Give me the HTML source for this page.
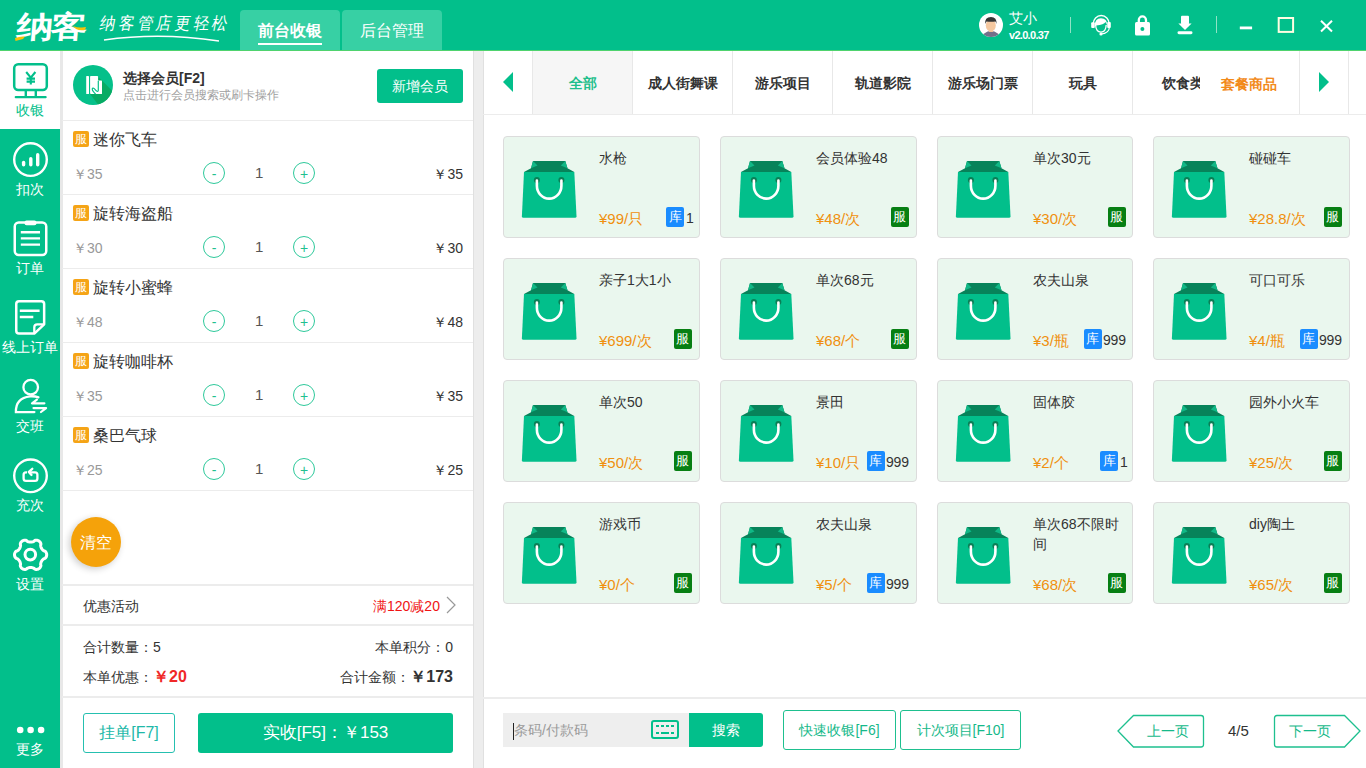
<!DOCTYPE html>
<html><head><meta charset="utf-8"><style>
*{margin:0;padding:0;box-sizing:border-box}
html,body{width:1366px;height:768px;overflow:hidden;background:#ededed;font-family:"Liberation Sans",sans-serif;color:#333}
div,span,svg{position:absolute}
.t{white-space:nowrap;line-height:1}
#top{left:0;top:0;width:1366px;height:50px;background:#02bf8b}
#topline{left:0;top:50px;width:1366px;height:1px;background:#4fd36e}
.tab{top:10px;height:40px;background:#37d0a4;border-radius:4px 4px 0 0;color:#fff;font-size:16px;text-align:center;line-height:42px}
#side{left:0;top:51px;width:60px;height:717px;background:#02bf8b}
#sidesel{left:0;top:51px;width:60px;height:78px;background:#fff}
#sideline{left:60px;top:51px;width:3px;height:717px;background:#e8e8e8}
.sl{left:0;width:60px;color:#fff;font-size:14px;text-align:center;line-height:14px}
#left{left:63px;top:51px;width:410px;height:717px;background:#fff}
#right{left:484px;top:51px;width:882px;height:717px;background:#fff}
.hl{height:1px;background:#ececec}
.badge{width:16px;height:16px;border-radius:2px;background:#f5a416;color:#fff;font-size:12px;line-height:16px;text-align:center}
.pn{font-size:16px;color:#333}
.pp{font-size:14px;color:#999}
.qb{width:22px;height:22px;border:1px solid #2ec99b;border-radius:50%;color:#22c08f;font-size:14px;text-align:center;line-height:22px}
.qn{font-size:15px;color:#555}
.pr{font-size:14px;color:#333;text-align:right}
.card{width:197px;height:102px;background:#eaf7ee;border:1px solid #dcdcdc;border-radius:4px}
.cn{font-size:14px;color:#333;line-height:20px;white-space:normal;word-break:break-all;width:94px}
.cp{font-size:15px;color:#f0900e}
.kb{width:18px;height:20px;border-radius:2px;background:#1a8cff;color:#fff;font-size:13px;line-height:20px;text-align:center}
.fb{width:18px;height:20px;border-radius:2px;background:#077f13;color:#fff;font-size:13px;line-height:20px;text-align:center}
.cat{white-space:nowrap;top:51px;height:63px;width:100px;border-left:1px solid #e8e8e8;font-size:14px;font-weight:bold;color:#333;text-align:center;line-height:64px}
.btn{border:1px solid #1ec08f;border-radius:3px;color:#16b98a;font-size:14px;text-align:center;background:#fff}
</style></head><body>
<div id="top"></div><div id="topline"></div>
<div class="tab" style="left:240px;width:100px;font-weight:bold">前台收银<span style="left:18px;top:33px;width:64px;height:2px;background:#fff;line-height:0"></span></div>
<div class="tab" style="left:342px;width:100px">后台管理</div>
<div class="t" style="left:18px;top:12px;font-size:30px;font-weight:900;color:#fff;letter-spacing:-2px;transform-origin:0 0;transform:scaleX(1.22) skewX(-4deg)">纳客</div>
<svg style="left:0;top:0" width="240" height="50"><path d="M15 38 Q20 36 25 36.5 L23 39 Q19 40 15.5 41Z" fill="#f7c20a"/><path d="M73 26 Q78 28 82 27.5 L86 27 L85 30 Q80 31 76 29Z" fill="#f7c20a"/><path d="M104 40 Q160 32 219 41" fill="none" stroke="#fff" stroke-width="1.3"/></svg>
<div class="t" style="left:102px;top:15px;font-size:15.5px;color:#fff;letter-spacing:2.7px;transform-origin:0 0;transform:scaleY(1.1) skewX(-12deg);font-weight:300">纳客管店更轻松</div>
<svg style="left:0;top:0" width="1366" height="50"><defs><clipPath id="av"><circle cx="991" cy="25" r="12"/></clipPath></defs><circle cx="991" cy="25" r="12" fill="#fff"/><g clip-path="url(#av)"><ellipse cx="991" cy="39" rx="9" ry="8" fill="#72708a"/><rect x="989" y="28" width="4" height="4" fill="#f0bf95"/><ellipse cx="990.8" cy="25.5" rx="5" ry="6" fill="#f5c8a0"/><path d="M985.2 24 Q984.5 17 991 17 Q997 17 996.5 24 L995.5 21.5 Q991 22 986.5 21.5Z" fill="#363636"/></g><rect x="1070" y="17" width="1" height="16" fill="#8fe3c6"/><rect x="1216" y="16" width="1" height="17" fill="#8fe3c6"/><path d="M1093.2 24 A8 8.5 0 0 1 1109.2 24" fill="none" stroke="#fff" stroke-width="1.4"/><rect x="1091.2" y="22.2" width="3.6" height="5.8" rx="1" fill="#fff"/><rect x="1107.2" y="22" width="3.6" height="6" rx="1" fill="#fff"/><path d="M1095 26 Q1094.5 18.3 1101 18.3 Q1107.3 18.3 1107 25 L1105.5 22 Q1104 24.8 1096.2 25.6Z" fill="#fff"/><path d="M1095.6 25 Q1096 32 1101 32.2 Q1105.8 32 1106.2 25" fill="none" stroke="#fff" stroke-width="1.3"/><path d="M1109.5 27 Q1109 33.5 1101 34" fill="none" stroke="#fff" stroke-width="1.2"/><circle cx="1101" cy="34" r="1.6" fill="#fff"/><path d="M1138.8 22.5 V20 A3.6 3.6 0 0 1 1146 20 V22.5" fill="none" stroke="#fff" stroke-width="2.3"/><rect x="1135" y="22" width="15" height="13.4" rx="1.5" fill="#fff"/><circle cx="1142.4" cy="28.9" r="2" fill="#02bf8b"/><rect x="1181" y="15.7" width="8" height="8.5" rx="1" fill="#fff"/><path d="M1178.4 23.4 H1191.6 L1185 30Z" fill="#fff"/><rect x="1177.5" y="31.3" width="15" height="2.9" rx="1.45" fill="#fff"/><rect x="1239.8" y="26.5" width="12.3" height="2.8" fill="#fff"/><rect x="1278.7" y="18" width="14.4" height="13.9" fill="none" stroke="#fffde2" stroke-width="2"/><path d="M1321 20.8 L1332 31.5 M1332 20.8 L1321 31.5" stroke="#fff" stroke-width="2"/></svg>
<div class="t" style="left:1009px;top:11px;font-size:14px;color:#fff">艾小</div>
<div class="t" style="left:1009px;top:30px;font-size:11px;font-weight:bold;color:#fff;letter-spacing:-0.7px">v2.0.0.37</div>
<div id="side"></div><div id="sidesel"></div><div id="sideline"></div>
<div class="sl t" style="top:103px;color:#02bf8b">收银</div>
<div class="sl t" style="top:182px;color:#fff">扣次</div>
<div class="sl t" style="top:261px;color:#fff">订单</div>
<div class="sl t" style="top:340px;color:#fff">线上订单</div>
<div class="sl t" style="top:419px;color:#fff">交班</div>
<div class="sl t" style="top:498px;color:#fff">充次</div>
<div class="sl t" style="top:577px;color:#fff">设置</div>
<div class="sl t" style="top:742px;color:#fff">更多</div>
<svg style="left:0;top:0" width="60" height="768"><rect x="14.2" y="64.2" width="32.6" height="25.8" rx="4" fill="none" stroke="#02bf8b" stroke-width="2.5"/><rect x="24.6" y="90" width="2.4" height="6.5" fill="#02bf8b"/><rect x="34.6" y="90" width="2.4" height="6.5" fill="#02bf8b"/><rect x="14.7" y="96" width="32" height="2.2" rx="1" fill="#02bf8b"/><path d="M26.2 72 L30.8 77.6 L35.4 72 M30.8 77.6 V84.6 M26.6 78.6 H35 M26.6 81.6 H35" fill="none" stroke="#02bf8b" stroke-width="2.1"/><circle cx="30.5" cy="159.6" r="16.3" fill="none" stroke="#fff" stroke-width="2.4"/><line x1="23.60" y1="162.50" x2="23.60" y2="164.80" stroke="#fff" stroke-width="3.4" stroke-linecap="round"/><line x1="30.80" y1="158.70" x2="30.80" y2="164.80" stroke="#fff" stroke-width="3.4" stroke-linecap="round"/><line x1="37.70" y1="154.70" x2="37.70" y2="164.80" stroke="#fff" stroke-width="3.4" stroke-linecap="round"/><rect x="14.75" y="222.5" width="31.5" height="32.5" rx="4" fill="none" stroke="#fff" stroke-width="2.5"/><rect x="24.5" y="220.5" width="12" height="4.8" rx="2" fill="#fff"/><path d="M20.8 232.2 H40 M20.8 238.4 H40 M20.8 244.6 H40" stroke="#fff" stroke-width="2.4"/><path d="M19 301.25 H41.4 Q44.15 301.25 44.15 304 V324.3 L34.3 333.55 H19 Q16.25 333.55 16.25 330.8 V304 Q16.25 301.25 19 301.25Z" fill="none" stroke="#fff" stroke-width="2.5" stroke-linejoin="round"/><path d="M44.15 324.3 H37.3 Q34.3 324.3 34.3 327.3 V333.55" fill="none" stroke="#fff" stroke-width="2.3"/><path d="M19.8 310.8 H39.6 M19.8 317 H33.3" stroke="#fff" stroke-width="2.4"/><circle cx="30.7" cy="387.2" r="7.3" fill="none" stroke="#fff" stroke-width="2.3"/><path d="M34.4 412.1 H15.9 Q15.5 398 30 396.3 Q35 396 38.4 397.4" fill="none" stroke="#fff" stroke-width="2.3" stroke-linecap="round"/><path d="M36.9 399.6 L32 403.3 L44.4 403.3 M33.5 408.1 H46.1 L41 412" fill="none" stroke="#fff" stroke-width="2.2" stroke-linecap="round" stroke-linejoin="round"/><circle cx="30.5" cy="475.8" r="16.3" fill="none" stroke="#fff" stroke-width="2.4"/><path d="M27 472.3 H26 Q23.6 472.3 23.6 474.8 V478.4 Q23.6 480.8 26 480.8 H35 Q37.4 480.8 37.4 478.4 V474.8 Q37.4 472.3 35 472.3 H29.5" fill="none" stroke="#fff" stroke-width="2.3"/><path d="M32.3 468.8 L28.8 471.9 L31.5 475" fill="none" stroke="#fff" stroke-width="2.3" stroke-linecap="round" stroke-linejoin="round"/><path d="M46.70 554.80 L46.67 555.36 L46.57 555.92 L46.41 556.46 L46.18 556.99 L45.89 557.50 L45.51 557.97 L45.00 558.39 L44.02 558.65 L43.50 558.99 L43.08 559.34 L42.71 559.69 L42.39 560.05 L42.10 560.41 L41.83 560.77 L41.60 561.15 L41.39 561.54 L41.20 561.95 L41.04 562.38 L40.89 562.84 L40.77 563.34 L40.68 563.87 L40.64 564.50 L40.91 565.47 L40.80 566.13 L40.58 566.69 L40.29 567.20 L39.94 567.66 L39.55 568.07 L39.12 568.43 L38.65 568.74 L38.15 569.00 L37.62 569.19 L37.07 569.32 L36.49 569.39 L35.91 569.39 L35.31 569.29 L34.69 569.06 L33.98 568.35 L33.42 568.06 L32.91 567.88 L32.42 567.74 L31.95 567.63 L31.49 567.56 L31.04 567.51 L30.60 567.50 L30.16 567.51 L29.71 567.56 L29.25 567.63 L28.78 567.74 L28.29 567.88 L27.78 568.06 L27.22 568.35 L26.51 569.06 L25.89 569.29 L25.29 569.39 L24.71 569.39 L24.13 569.32 L23.58 569.19 L23.05 569.00 L22.55 568.74 L22.08 568.43 L21.65 568.07 L21.26 567.66 L20.91 567.20 L20.62 566.69 L20.40 566.13 L20.29 565.47 L20.56 564.50 L20.52 563.87 L20.43 563.34 L20.31 562.84 L20.16 562.38 L20.00 561.95 L19.81 561.54 L19.60 561.15 L19.37 560.77 L19.10 560.41 L18.81 560.05 L18.49 559.69 L18.12 559.34 L17.70 558.99 L17.18 558.65 L16.20 558.39 L15.69 557.97 L15.31 557.50 L15.02 556.99 L14.79 556.46 L14.63 555.92 L14.53 555.36 L14.50 554.80 L14.53 554.24 L14.63 553.68 L14.79 553.14 L15.02 552.61 L15.31 552.10 L15.69 551.63 L16.20 551.21 L17.18 550.95 L17.70 550.61 L18.12 550.26 L18.49 549.91 L18.81 549.55 L19.10 549.19 L19.37 548.83 L19.60 548.45 L19.81 548.06 L20.00 547.65 L20.16 547.22 L20.31 546.76 L20.43 546.26 L20.52 545.73 L20.56 545.10 L20.29 544.13 L20.40 543.47 L20.62 542.91 L20.91 542.40 L21.26 541.94 L21.65 541.53 L22.08 541.17 L22.55 540.86 L23.05 540.60 L23.58 540.41 L24.13 540.28 L24.71 540.21 L25.29 540.21 L25.89 540.31 L26.51 540.54 L27.22 541.25 L27.78 541.54 L28.29 541.72 L28.78 541.86 L29.25 541.97 L29.71 542.04 L30.16 542.09 L30.60 542.10 L31.04 542.09 L31.49 542.04 L31.95 541.97 L32.42 541.86 L32.91 541.72 L33.42 541.54 L33.98 541.25 L34.69 540.54 L35.31 540.31 L35.91 540.21 L36.49 540.21 L37.07 540.28 L37.62 540.41 L38.15 540.60 L38.65 540.86 L39.12 541.17 L39.55 541.53 L39.94 541.94 L40.29 542.40 L40.58 542.91 L40.80 543.47 L40.91 544.13 L40.64 545.10 L40.68 545.73 L40.77 546.26 L40.89 546.76 L41.04 547.22 L41.20 547.65 L41.39 548.06 L41.60 548.45 L41.83 548.83 L42.10 549.19 L42.39 549.55 L42.71 549.91 L43.08 550.26 L43.50 550.61 L44.02 550.95 L45.00 551.21 L45.51 551.63 L45.89 552.10 L46.18 552.61 L46.41 553.14 L46.57 553.68 L46.67 554.24Z" fill="none" stroke="#fff" stroke-width="3"/><circle cx="30.3" cy="554.6" r="5.3" fill="none" stroke="#fff" stroke-width="3"/><circle cx="20.2" cy="730" r="3.3" fill="#fff"/><circle cx="30.6" cy="730" r="3.3" fill="#fff"/><circle cx="41.1" cy="730" r="3.3" fill="#fff"/></svg>
<div id="left"></div><div id="right"></div><div style="left:473px;top:51px;width:1px;height:717px;background:#e0e0e0"></div><div style="left:483px;top:51px;width:1px;height:717px;background:#e0e0e0"></div>
<svg style="left:0;top:0" width="480" height="120"><defs><clipPath id="mc"><circle cx="93" cy="85" r="20"/></clipPath></defs><circle cx="93" cy="85" r="20" fill="#05c08a"/><g clip-path="url(#mc)"><path d="M98 77 L102 80.6 L125 104 L110 120 L90 94Z" fill="#07ab63"/></g><rect x="86.2" y="76" width="2.8" height="18" rx="0.6" fill="#fff"/><rect x="90.1" y="76" width="8" height="18" rx="0.8" fill="#fff"/><rect x="97" y="80.6" width="5" height="13.4" rx="0.6" fill="#fff"/><path d="M98.3 80.8 V90.5 Q98 92.3 96.3 90.8 L94.3 88.6 Q92.8 87.4 92.2 88.9 Q92 90.3 94.2 92.6 L95.6 94.2" fill="none" stroke="#05c08a" stroke-width="1.2"/></svg>
<div class="t" style="left:123px;top:71px;font-size:14px;font-weight:bold;color:#333">选择会员[F2]</div>
<div class="t" style="left:123px;top:89px;font-size:12px;color:#a0a0a0">点击进行会员搜索或刷卡操作</div>
<div style="left:377px;top:69px;width:86px;height:34px;border-radius:3px;background:#02bf8b;color:#fff;font-size:14px;line-height:34px;text-align:center">新增会员</div>
<div class="hl" style="left:62px;top:120px;width:411px"></div>
<div class="badge" style="left:73px;top:131px">服</div>
<div class="t pn" style="left:93px;top:132px">迷你飞车</div>
<div class="t pp" style="left:73px;top:167px">￥35</div>
<div class="qb" style="left:203px;top:162px">-</div>
<div class="t qn" style="left:255px;top:165px">1</div>
<div class="qb" style="left:293px;top:162px">+</div>
<div class="t pr" style="left:403px;width:60px;top:167px">￥35</div>
<div class="hl" style="left:62px;top:194px;width:411px"></div>
<div class="badge" style="left:73px;top:205px">服</div>
<div class="t pn" style="left:93px;top:206px">旋转海盗船</div>
<div class="t pp" style="left:73px;top:241px">￥30</div>
<div class="qb" style="left:203px;top:236px">-</div>
<div class="t qn" style="left:255px;top:239px">1</div>
<div class="qb" style="left:293px;top:236px">+</div>
<div class="t pr" style="left:403px;width:60px;top:241px">￥30</div>
<div class="hl" style="left:62px;top:268px;width:411px"></div>
<div class="badge" style="left:73px;top:279px">服</div>
<div class="t pn" style="left:93px;top:280px">旋转小蜜蜂</div>
<div class="t pp" style="left:73px;top:315px">￥48</div>
<div class="qb" style="left:203px;top:310px">-</div>
<div class="t qn" style="left:255px;top:313px">1</div>
<div class="qb" style="left:293px;top:310px">+</div>
<div class="t pr" style="left:403px;width:60px;top:315px">￥48</div>
<div class="hl" style="left:62px;top:342px;width:411px"></div>
<div class="badge" style="left:73px;top:353px">服</div>
<div class="t pn" style="left:93px;top:354px">旋转咖啡杯</div>
<div class="t pp" style="left:73px;top:389px">￥35</div>
<div class="qb" style="left:203px;top:384px">-</div>
<div class="t qn" style="left:255px;top:387px">1</div>
<div class="qb" style="left:293px;top:384px">+</div>
<div class="t pr" style="left:403px;width:60px;top:389px">￥35</div>
<div class="hl" style="left:62px;top:416px;width:411px"></div>
<div class="badge" style="left:73px;top:427px">服</div>
<div class="t pn" style="left:93px;top:428px">桑巴气球</div>
<div class="t pp" style="left:73px;top:463px">￥25</div>
<div class="qb" style="left:203px;top:458px">-</div>
<div class="t qn" style="left:255px;top:461px">1</div>
<div class="qb" style="left:293px;top:458px">+</div>
<div class="t pr" style="left:403px;width:60px;top:463px">￥25</div>
<div class="hl" style="left:62px;top:490px;width:411px"></div>
<div style="left:71px;top:517px;width:50px;height:50px;border-radius:50%;background:#f5a20a;box-shadow:-2px 2px 7px rgba(0,0,0,.2);color:#fff;font-size:16px;line-height:52px;text-align:center">清空</div>
<div style="left:62px;top:584px;width:411px;height:2px;background:#ececec"></div>
<div class="t" style="left:83px;top:599px;font-size:14px;color:#333">优惠活动</div>
<div class="t" style="left:373px;top:599px;font-size:14px;color:#f01414">满120减20</div>
<svg style="left:444px;top:596px" width="14" height="18"><path d="M3 1 L11 9 L3 17" fill="none" stroke="#999" stroke-width="1.2"/></svg>
<div style="left:62px;top:624px;width:411px;height:2px;background:#ececec"></div>
<div class="t" style="left:83px;top:640px;font-size:14px;color:#333">合计数量：5</div>
<div class="t" style="left:303px;width:150px;text-align:right;top:640px;font-size:14px;color:#333">本单积分：0</div>
<div class="t" style="left:83px;top:669px;font-size:14px;color:#333">本单优惠：<span style="position:static;color:#f02828;font-weight:bold;font-size:16px">￥20</span></div>
<div class="t" style="left:273px;width:180px;text-align:right;top:669px;font-size:14px;color:#333">合计金额：<span style="position:static;color:#333;font-weight:bold;font-size:16px">￥173</span></div>
<div style="left:62px;top:696px;width:411px;height:2px;background:#ececec"></div>
<div style="left:83px;top:713px;width:92px;height:40px;border:1px solid #25c0b0;border-radius:3px;color:#20b8a8;font-size:16px;line-height:38px;text-align:center">挂单[F7]</div>
<div style="left:198px;top:713px;width:255px;height:40px;border-radius:3px;background:#02bf8b;color:#fff;font-size:17px;line-height:40px;text-align:center">实收[F5]：￥153</div>
<svg style="left:503px;top:72px" width="10" height="20"><path d="M10 0 L0 10 L10 20Z" fill="#02bf8b"/></svg>
<div class="cat" style="left:532px;background:#f6f6f6;color:#1fbf8c;">全部</div>
<div class="cat" style="left:632px;">成人街舞课</div>
<div class="cat" style="left:732px;">游乐项目</div>
<div class="cat" style="left:832px;">轨道影院</div>
<div class="cat" style="left:932px;">游乐场门票</div>
<div class="cat" style="left:1032px;">玩具</div>
<div class="cat" style="left:1132px;width:68px;overflow:hidden;text-align:left"><span style="position:static;margin-left:29px">饮食类</span></div>
<div class="t" style="left:1221px;top:77px;font-size:14px;font-weight:bold;color:#f28a1a">套餐商品</div>
<div style="left:1299px;top:51px;width:1px;height:63px;background:#e8e8e8"></div>
<div style="left:1348px;top:51px;width:1px;height:63px;background:#e8e8e8"></div>
<svg style="left:1319px;top:72px" width="10" height="20"><path d="M0 0 L10 10 L0 20Z" fill="#02bf8b"/></svg>
<div class="hl" style="left:483px;top:114px;width:883px"></div>
<div class="card" style="left:503px;top:136px"><svg style="left:17px;top:23px" width="58" height="60" viewBox="0 0 58 60"><path d="M12 1 H44.3 L46.5 8.2 L53.3 12 H3 L10 8.2Z" fill="#07835a"/><path d="M12 1 L16.5 5.4 L10 8.2Z" fill="#10b886"/><path d="M44.3 1 L39.8 5.4 L46.5 8.2Z" fill="#10b886"/><path d="M3 11.9 H53.3 L55.5 56.2 Q55.5 57.7 54 57.7 H2.4 Q0.9 57.7 0.9 56.2Z" fill="#02bf8b"/><circle cx="15.9" cy="20.1" r="3" fill="#0a7f56"/><circle cx="40.4" cy="20.1" r="3" fill="#0a7f56"/><path d="M15.9 20.6 V25.7 A12.25 12.9 0 0 0 40.4 25.7 V20.6" fill="none" stroke="#fff" stroke-width="2.6" stroke-linecap="round"/></svg><div class="cn" style="left:95px;top:11px">水枪</div><div class="t cp" style="left:95px;top:74px">¥99/只</div><div class="kb" style="left:162.0px;top:70px">库</div><div class="t" style="left:182.0px;top:74px;font-size:14px;color:#333;letter-spacing:-0.2px">1</div></div>
<div class="card" style="left:720px;top:136px"><svg style="left:17px;top:23px" width="58" height="60" viewBox="0 0 58 60"><path d="M12 1 H44.3 L46.5 8.2 L53.3 12 H3 L10 8.2Z" fill="#07835a"/><path d="M12 1 L16.5 5.4 L10 8.2Z" fill="#10b886"/><path d="M44.3 1 L39.8 5.4 L46.5 8.2Z" fill="#10b886"/><path d="M3 11.9 H53.3 L55.5 56.2 Q55.5 57.7 54 57.7 H2.4 Q0.9 57.7 0.9 56.2Z" fill="#02bf8b"/><circle cx="15.9" cy="20.1" r="3" fill="#0a7f56"/><circle cx="40.4" cy="20.1" r="3" fill="#0a7f56"/><path d="M15.9 20.6 V25.7 A12.25 12.9 0 0 0 40.4 25.7 V20.6" fill="none" stroke="#fff" stroke-width="2.6" stroke-linecap="round"/></svg><div class="cn" style="left:95px;top:11px">会员体验48</div><div class="t cp" style="left:95px;top:74px">¥48/次</div><div class="fb" style="left:169.5px;top:70px">服</div></div>
<div class="card" style="left:937px;top:136px;width:196px"><svg style="left:17px;top:23px" width="58" height="60" viewBox="0 0 58 60"><path d="M12 1 H44.3 L46.5 8.2 L53.3 12 H3 L10 8.2Z" fill="#07835a"/><path d="M12 1 L16.5 5.4 L10 8.2Z" fill="#10b886"/><path d="M44.3 1 L39.8 5.4 L46.5 8.2Z" fill="#10b886"/><path d="M3 11.9 H53.3 L55.5 56.2 Q55.5 57.7 54 57.7 H2.4 Q0.9 57.7 0.9 56.2Z" fill="#02bf8b"/><circle cx="15.9" cy="20.1" r="3" fill="#0a7f56"/><circle cx="40.4" cy="20.1" r="3" fill="#0a7f56"/><path d="M15.9 20.6 V25.7 A12.25 12.9 0 0 0 40.4 25.7 V20.6" fill="none" stroke="#fff" stroke-width="2.6" stroke-linecap="round"/></svg><div class="cn" style="left:95px;top:11px">单次30元</div><div class="t cp" style="left:95px;top:74px">¥30/次</div><div class="fb" style="left:169.5px;top:70px">服</div></div>
<div class="card" style="left:1153px;top:136px"><svg style="left:17px;top:23px" width="58" height="60" viewBox="0 0 58 60"><path d="M12 1 H44.3 L46.5 8.2 L53.3 12 H3 L10 8.2Z" fill="#07835a"/><path d="M12 1 L16.5 5.4 L10 8.2Z" fill="#10b886"/><path d="M44.3 1 L39.8 5.4 L46.5 8.2Z" fill="#10b886"/><path d="M3 11.9 H53.3 L55.5 56.2 Q55.5 57.7 54 57.7 H2.4 Q0.9 57.7 0.9 56.2Z" fill="#02bf8b"/><circle cx="15.9" cy="20.1" r="3" fill="#0a7f56"/><circle cx="40.4" cy="20.1" r="3" fill="#0a7f56"/><path d="M15.9 20.6 V25.7 A12.25 12.9 0 0 0 40.4 25.7 V20.6" fill="none" stroke="#fff" stroke-width="2.6" stroke-linecap="round"/></svg><div class="cn" style="left:95px;top:11px">碰碰车</div><div class="t cp" style="left:95px;top:74px">¥28.8/次</div><div class="fb" style="left:169.5px;top:70px">服</div></div>
<div class="card" style="left:503px;top:258px"><svg style="left:17px;top:23px" width="58" height="60" viewBox="0 0 58 60"><path d="M12 1 H44.3 L46.5 8.2 L53.3 12 H3 L10 8.2Z" fill="#07835a"/><path d="M12 1 L16.5 5.4 L10 8.2Z" fill="#10b886"/><path d="M44.3 1 L39.8 5.4 L46.5 8.2Z" fill="#10b886"/><path d="M3 11.9 H53.3 L55.5 56.2 Q55.5 57.7 54 57.7 H2.4 Q0.9 57.7 0.9 56.2Z" fill="#02bf8b"/><circle cx="15.9" cy="20.1" r="3" fill="#0a7f56"/><circle cx="40.4" cy="20.1" r="3" fill="#0a7f56"/><path d="M15.9 20.6 V25.7 A12.25 12.9 0 0 0 40.4 25.7 V20.6" fill="none" stroke="#fff" stroke-width="2.6" stroke-linecap="round"/></svg><div class="cn" style="left:95px;top:11px">亲子1大1小</div><div class="t cp" style="left:95px;top:74px">¥699/次</div><div class="fb" style="left:169.5px;top:70px">服</div></div>
<div class="card" style="left:720px;top:258px"><svg style="left:17px;top:23px" width="58" height="60" viewBox="0 0 58 60"><path d="M12 1 H44.3 L46.5 8.2 L53.3 12 H3 L10 8.2Z" fill="#07835a"/><path d="M12 1 L16.5 5.4 L10 8.2Z" fill="#10b886"/><path d="M44.3 1 L39.8 5.4 L46.5 8.2Z" fill="#10b886"/><path d="M3 11.9 H53.3 L55.5 56.2 Q55.5 57.7 54 57.7 H2.4 Q0.9 57.7 0.9 56.2Z" fill="#02bf8b"/><circle cx="15.9" cy="20.1" r="3" fill="#0a7f56"/><circle cx="40.4" cy="20.1" r="3" fill="#0a7f56"/><path d="M15.9 20.6 V25.7 A12.25 12.9 0 0 0 40.4 25.7 V20.6" fill="none" stroke="#fff" stroke-width="2.6" stroke-linecap="round"/></svg><div class="cn" style="left:95px;top:11px">单次68元</div><div class="t cp" style="left:95px;top:74px">¥68/个</div><div class="fb" style="left:169.5px;top:70px">服</div></div>
<div class="card" style="left:937px;top:258px;width:196px"><svg style="left:17px;top:23px" width="58" height="60" viewBox="0 0 58 60"><path d="M12 1 H44.3 L46.5 8.2 L53.3 12 H3 L10 8.2Z" fill="#07835a"/><path d="M12 1 L16.5 5.4 L10 8.2Z" fill="#10b886"/><path d="M44.3 1 L39.8 5.4 L46.5 8.2Z" fill="#10b886"/><path d="M3 11.9 H53.3 L55.5 56.2 Q55.5 57.7 54 57.7 H2.4 Q0.9 57.7 0.9 56.2Z" fill="#02bf8b"/><circle cx="15.9" cy="20.1" r="3" fill="#0a7f56"/><circle cx="40.4" cy="20.1" r="3" fill="#0a7f56"/><path d="M15.9 20.6 V25.7 A12.25 12.9 0 0 0 40.4 25.7 V20.6" fill="none" stroke="#fff" stroke-width="2.6" stroke-linecap="round"/></svg><div class="cn" style="left:95px;top:11px">农夫山泉</div><div class="t cp" style="left:95px;top:74px">¥3/瓶</div><div class="kb" style="left:145.5px;top:70px">库</div><div class="t" style="left:165.0px;top:74px;font-size:14px;color:#333;letter-spacing:-0.2px">999</div></div>
<div class="card" style="left:1153px;top:258px"><svg style="left:17px;top:23px" width="58" height="60" viewBox="0 0 58 60"><path d="M12 1 H44.3 L46.5 8.2 L53.3 12 H3 L10 8.2Z" fill="#07835a"/><path d="M12 1 L16.5 5.4 L10 8.2Z" fill="#10b886"/><path d="M44.3 1 L39.8 5.4 L46.5 8.2Z" fill="#10b886"/><path d="M3 11.9 H53.3 L55.5 56.2 Q55.5 57.7 54 57.7 H2.4 Q0.9 57.7 0.9 56.2Z" fill="#02bf8b"/><circle cx="15.9" cy="20.1" r="3" fill="#0a7f56"/><circle cx="40.4" cy="20.1" r="3" fill="#0a7f56"/><path d="M15.9 20.6 V25.7 A12.25 12.9 0 0 0 40.4 25.7 V20.6" fill="none" stroke="#fff" stroke-width="2.6" stroke-linecap="round"/></svg><div class="cn" style="left:95px;top:11px">可口可乐</div><div class="t cp" style="left:95px;top:74px">¥4/瓶</div><div class="kb" style="left:145.5px;top:70px">库</div><div class="t" style="left:165.0px;top:74px;font-size:14px;color:#333;letter-spacing:-0.2px">999</div></div>
<div class="card" style="left:503px;top:380px"><svg style="left:17px;top:23px" width="58" height="60" viewBox="0 0 58 60"><path d="M12 1 H44.3 L46.5 8.2 L53.3 12 H3 L10 8.2Z" fill="#07835a"/><path d="M12 1 L16.5 5.4 L10 8.2Z" fill="#10b886"/><path d="M44.3 1 L39.8 5.4 L46.5 8.2Z" fill="#10b886"/><path d="M3 11.9 H53.3 L55.5 56.2 Q55.5 57.7 54 57.7 H2.4 Q0.9 57.7 0.9 56.2Z" fill="#02bf8b"/><circle cx="15.9" cy="20.1" r="3" fill="#0a7f56"/><circle cx="40.4" cy="20.1" r="3" fill="#0a7f56"/><path d="M15.9 20.6 V25.7 A12.25 12.9 0 0 0 40.4 25.7 V20.6" fill="none" stroke="#fff" stroke-width="2.6" stroke-linecap="round"/></svg><div class="cn" style="left:95px;top:11px">单次50</div><div class="t cp" style="left:95px;top:74px">¥50/次</div><div class="fb" style="left:169.5px;top:70px">服</div></div>
<div class="card" style="left:720px;top:380px"><svg style="left:17px;top:23px" width="58" height="60" viewBox="0 0 58 60"><path d="M12 1 H44.3 L46.5 8.2 L53.3 12 H3 L10 8.2Z" fill="#07835a"/><path d="M12 1 L16.5 5.4 L10 8.2Z" fill="#10b886"/><path d="M44.3 1 L39.8 5.4 L46.5 8.2Z" fill="#10b886"/><path d="M3 11.9 H53.3 L55.5 56.2 Q55.5 57.7 54 57.7 H2.4 Q0.9 57.7 0.9 56.2Z" fill="#02bf8b"/><circle cx="15.9" cy="20.1" r="3" fill="#0a7f56"/><circle cx="40.4" cy="20.1" r="3" fill="#0a7f56"/><path d="M15.9 20.6 V25.7 A12.25 12.9 0 0 0 40.4 25.7 V20.6" fill="none" stroke="#fff" stroke-width="2.6" stroke-linecap="round"/></svg><div class="cn" style="left:95px;top:11px">景田</div><div class="t cp" style="left:95px;top:74px">¥10/只</div><div class="kb" style="left:145.5px;top:70px">库</div><div class="t" style="left:165.0px;top:74px;font-size:14px;color:#333;letter-spacing:-0.2px">999</div></div>
<div class="card" style="left:937px;top:380px;width:196px"><svg style="left:17px;top:23px" width="58" height="60" viewBox="0 0 58 60"><path d="M12 1 H44.3 L46.5 8.2 L53.3 12 H3 L10 8.2Z" fill="#07835a"/><path d="M12 1 L16.5 5.4 L10 8.2Z" fill="#10b886"/><path d="M44.3 1 L39.8 5.4 L46.5 8.2Z" fill="#10b886"/><path d="M3 11.9 H53.3 L55.5 56.2 Q55.5 57.7 54 57.7 H2.4 Q0.9 57.7 0.9 56.2Z" fill="#02bf8b"/><circle cx="15.9" cy="20.1" r="3" fill="#0a7f56"/><circle cx="40.4" cy="20.1" r="3" fill="#0a7f56"/><path d="M15.9 20.6 V25.7 A12.25 12.9 0 0 0 40.4 25.7 V20.6" fill="none" stroke="#fff" stroke-width="2.6" stroke-linecap="round"/></svg><div class="cn" style="left:95px;top:11px">固体胶</div><div class="t cp" style="left:95px;top:74px">¥2/个</div><div class="kb" style="left:162.0px;top:70px">库</div><div class="t" style="left:182.0px;top:74px;font-size:14px;color:#333;letter-spacing:-0.2px">1</div></div>
<div class="card" style="left:1153px;top:380px"><svg style="left:17px;top:23px" width="58" height="60" viewBox="0 0 58 60"><path d="M12 1 H44.3 L46.5 8.2 L53.3 12 H3 L10 8.2Z" fill="#07835a"/><path d="M12 1 L16.5 5.4 L10 8.2Z" fill="#10b886"/><path d="M44.3 1 L39.8 5.4 L46.5 8.2Z" fill="#10b886"/><path d="M3 11.9 H53.3 L55.5 56.2 Q55.5 57.7 54 57.7 H2.4 Q0.9 57.7 0.9 56.2Z" fill="#02bf8b"/><circle cx="15.9" cy="20.1" r="3" fill="#0a7f56"/><circle cx="40.4" cy="20.1" r="3" fill="#0a7f56"/><path d="M15.9 20.6 V25.7 A12.25 12.9 0 0 0 40.4 25.7 V20.6" fill="none" stroke="#fff" stroke-width="2.6" stroke-linecap="round"/></svg><div class="cn" style="left:95px;top:11px">园外小火车</div><div class="t cp" style="left:95px;top:74px">¥25/次</div><div class="fb" style="left:169.5px;top:70px">服</div></div>
<div class="card" style="left:503px;top:502px"><svg style="left:17px;top:23px" width="58" height="60" viewBox="0 0 58 60"><path d="M12 1 H44.3 L46.5 8.2 L53.3 12 H3 L10 8.2Z" fill="#07835a"/><path d="M12 1 L16.5 5.4 L10 8.2Z" fill="#10b886"/><path d="M44.3 1 L39.8 5.4 L46.5 8.2Z" fill="#10b886"/><path d="M3 11.9 H53.3 L55.5 56.2 Q55.5 57.7 54 57.7 H2.4 Q0.9 57.7 0.9 56.2Z" fill="#02bf8b"/><circle cx="15.9" cy="20.1" r="3" fill="#0a7f56"/><circle cx="40.4" cy="20.1" r="3" fill="#0a7f56"/><path d="M15.9 20.6 V25.7 A12.25 12.9 0 0 0 40.4 25.7 V20.6" fill="none" stroke="#fff" stroke-width="2.6" stroke-linecap="round"/></svg><div class="cn" style="left:95px;top:11px">游戏币</div><div class="t cp" style="left:95px;top:74px">¥0/个</div><div class="fb" style="left:169.5px;top:70px">服</div></div>
<div class="card" style="left:720px;top:502px"><svg style="left:17px;top:23px" width="58" height="60" viewBox="0 0 58 60"><path d="M12 1 H44.3 L46.5 8.2 L53.3 12 H3 L10 8.2Z" fill="#07835a"/><path d="M12 1 L16.5 5.4 L10 8.2Z" fill="#10b886"/><path d="M44.3 1 L39.8 5.4 L46.5 8.2Z" fill="#10b886"/><path d="M3 11.9 H53.3 L55.5 56.2 Q55.5 57.7 54 57.7 H2.4 Q0.9 57.7 0.9 56.2Z" fill="#02bf8b"/><circle cx="15.9" cy="20.1" r="3" fill="#0a7f56"/><circle cx="40.4" cy="20.1" r="3" fill="#0a7f56"/><path d="M15.9 20.6 V25.7 A12.25 12.9 0 0 0 40.4 25.7 V20.6" fill="none" stroke="#fff" stroke-width="2.6" stroke-linecap="round"/></svg><div class="cn" style="left:95px;top:11px">农夫山泉</div><div class="t cp" style="left:95px;top:74px">¥5/个</div><div class="kb" style="left:145.5px;top:70px">库</div><div class="t" style="left:165.0px;top:74px;font-size:14px;color:#333;letter-spacing:-0.2px">999</div></div>
<div class="card" style="left:937px;top:502px;width:196px"><svg style="left:17px;top:23px" width="58" height="60" viewBox="0 0 58 60"><path d="M12 1 H44.3 L46.5 8.2 L53.3 12 H3 L10 8.2Z" fill="#07835a"/><path d="M12 1 L16.5 5.4 L10 8.2Z" fill="#10b886"/><path d="M44.3 1 L39.8 5.4 L46.5 8.2Z" fill="#10b886"/><path d="M3 11.9 H53.3 L55.5 56.2 Q55.5 57.7 54 57.7 H2.4 Q0.9 57.7 0.9 56.2Z" fill="#02bf8b"/><circle cx="15.9" cy="20.1" r="3" fill="#0a7f56"/><circle cx="40.4" cy="20.1" r="3" fill="#0a7f56"/><path d="M15.9 20.6 V25.7 A12.25 12.9 0 0 0 40.4 25.7 V20.6" fill="none" stroke="#fff" stroke-width="2.6" stroke-linecap="round"/></svg><div class="cn" style="left:95px;top:11px">单次68不限时间</div><div class="t cp" style="left:95px;top:74px">¥68/次</div><div class="fb" style="left:169.5px;top:70px">服</div></div>
<div class="card" style="left:1153px;top:502px"><svg style="left:17px;top:23px" width="58" height="60" viewBox="0 0 58 60"><path d="M12 1 H44.3 L46.5 8.2 L53.3 12 H3 L10 8.2Z" fill="#07835a"/><path d="M12 1 L16.5 5.4 L10 8.2Z" fill="#10b886"/><path d="M44.3 1 L39.8 5.4 L46.5 8.2Z" fill="#10b886"/><path d="M3 11.9 H53.3 L55.5 56.2 Q55.5 57.7 54 57.7 H2.4 Q0.9 57.7 0.9 56.2Z" fill="#02bf8b"/><circle cx="15.9" cy="20.1" r="3" fill="#0a7f56"/><circle cx="40.4" cy="20.1" r="3" fill="#0a7f56"/><path d="M15.9 20.6 V25.7 A12.25 12.9 0 0 0 40.4 25.7 V20.6" fill="none" stroke="#fff" stroke-width="2.6" stroke-linecap="round"/></svg><div class="cn" style="left:95px;top:11px">diy陶土</div><div class="t cp" style="left:95px;top:74px">¥65/次</div><div class="fb" style="left:169.5px;top:70px">服</div></div>
<div class="hl" style="left:483px;top:697px;width:883px;height:2px;background:#ececec"></div>
<div style="left:503px;top:713px;width:186px;height:34px;background:#eeeeee"></div>
<div style="left:513px;top:723px;width:1px;height:17px;background:#222"></div>
<div class="t" style="left:514px;top:723px;font-size:14px;color:#9a9a9a">条码/付款码</div>
<svg style="left:651px;top:720px" width="28" height="19"><rect x="1" y="1" width="26" height="17" rx="2" fill="none" stroke="#02bf8b" stroke-width="2"/><path d="M5 6h3M10 6h3M15 6h3M20 6h3M5 13h3M10 13h8M20 13h3" stroke="#02bf8b" stroke-width="2"/></svg>
<div style="left:689px;top:713px;width:74px;height:34px;background:#02bf8b;border-radius:0 3px 3px 0;color:#fff;font-size:14px;line-height:34px;text-align:center">搜索</div>
<div class="btn" style="left:783px;top:710px;width:113px;height:40px;line-height:38px">快速收银[F6]</div>
<div class="btn" style="left:900px;top:710px;width:121px;height:40px;line-height:38px">计次项目[F10]</div>
<svg style="left:1116px;top:714px" width="90" height="35"><path d="M2 17 L17.5 1.5 L85 1.5 Q87.5 1.5 87.5 4 L87.5 30.5 Q87.5 33 85 33 L17.5 33Z" fill="#fff" stroke="#1ec08f" stroke-width="1.3"/></svg>
<div class="t" style="left:1147px;top:724px;font-size:14px;color:#16b98a">上一页</div>
<div class="t" style="left:1228px;top:723px;font-size:15px;color:#333">4/5</div>
<svg style="left:1272px;top:714px" width="90" height="35"><path d="M88 17 L72.5 1.5 L5 1.5 Q2.5 1.5 2.5 4 L2.5 30.5 Q2.5 33 5 33 L72.5 33Z" fill="#fff" stroke="#1ec08f" stroke-width="1.3"/></svg>
<div class="t" style="left:1289px;top:724px;font-size:14px;color:#16b98a">下一页</div>
</body></html>
